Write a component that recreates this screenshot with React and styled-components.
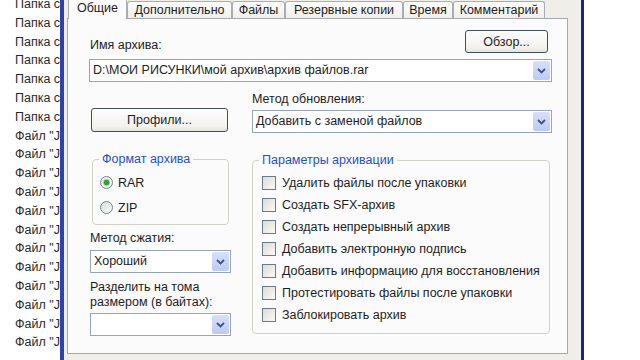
import React from 'react';
import styled, { createGlobalStyle } from 'styled-components';

const GlobalStyle = createGlobalStyle`
  html, body {
    margin: 0;
    padding: 0;
    background: #fff;
  }
  body {
    font-family: "Liberation Sans", Arial, sans-serif;
    font-size: 12.5px;
    color: #1d1d1d;
  }
`;

const tabs = [
  { label: 'Общие', width: 59, active: true },
  { label: 'Дополнительно', width: 105 },
  { label: 'Файлы', width: 53 },
  { label: 'Резервные копии', width: 118 },
  { label: 'Время', width: 50 },
  { label: 'Комментарий', width: 92 },
];

const options = [
  'Удалить файлы после упаковки',
  'Создать SFX-архив',
  'Создать непрерывный архив',
  'Добавить электронную подпись',
  'Добавить информацию для восстановления',
  'Протестировать файлы после упаковки',
  'Заблокировать архив',
];

// list behind the dialog, only its left edge is visible
const files = [...Array(7).fill('Папка с'), ...Array(12).fill('Файл "J')];

function Chevron() {
  return (
    <svg width="9" height="6" viewBox="0 0 9 6">
      <polyline points="1,1 4.5,4.5 8,1" fill="none" stroke="#3f5286" strokeWidth="1.8" />
    </svg>
  );
}

function Combo({ value }) {
  return (
    <ComboBox>
      <ComboText>{value}</ComboText>
      <DropButton>
        <Chevron />
      </DropButton>
    </ComboBox>
  );
}

function App() {
  return (
    <>
      <GlobalStyle />
      <Screen>
        <FileList>
          {files.map((f, i) => (
            <FileItem key={i}>{f}</FileItem>
          ))}
        </FileList>
        <Dialog>
          <TabStrip>
            {tabs.map((t) => (
              <Tab key={t.label} $width={t.width} $active={t.active}>
                {t.label}
              </Tab>
            ))}
          </TabStrip>
          <Panel>
            <TopRow>
              <Label>Имя архива:</Label>
              <Button $width={83} $right={4}>Обзор...</Button>
            </TopRow>
            <NameCombo>
              <Combo value="D:\МОИ РИСУНКИ\мой архив\архив файлов.rar" />
            </NameCombo>
            <Columns>
              <Column>
                <Button $width={137} $left={1} $top={16}>Профили...</Button>
                <Group $top={20} $left={2} $width={137}>
                  <Legend>Формат архива</Legend>
                  <GroupBody $pad="4px 0 4px 7px">
                    <RadioRow>
                      <Radio $checked />
                      RAR
                    </RadioRow>
                    <RadioRow>
                      <Radio />
                      ZIP
                    </RadioRow>
                  </GroupBody>
                </Group>
                <Label $top={6}>Метод сжатия:</Label>
                <Spaced $top={4}>
                  <Combo value="Хороший" />
                </Spaced>
                <Label $top={7}>
                  Разделить на тома
                  <br />
                  размером (в байтах):
                </Label>
                <Spaced $top={3}>
                  <Combo value="" />
                </Spaced>
              </Column>
              <Column>
                <Label>Метод обновления:</Label>
                <Spaced $top={3}>
                  <Combo value="Добавить с заменой файлов" />
                </Spaced>
                <Group $top={20} $width={298}>
                  <Legend>Параметры архивации</Legend>
                  <GroupBody $pad="5px 0 7px 9px">
                    {options.map((o) => (
                      <CheckRow key={o}>
                        <CheckBox />
                        {o}
                      </CheckRow>
                    ))}
                  </GroupBody>
                </Group>
              </Column>
            </Columns>
          </Panel>
        </Dialog>
      </Screen>
    </>
  );
}

const Screen = styled.div`
  display: flex;
  width: 640px;
  height: 360px;
  overflow: hidden;
  background: #fff;
`;

const FileList = styled.ul`
  flex: none;
  width: 60px;
  margin: -5px 0 0;
  padding: 0;
  list-style: none;
  overflow: hidden;
  white-space: nowrap;
`;

const FileItem = styled.li`
  height: 18.8px;
  line-height: 18.8px;
  padding-left: 15px;
  overflow: hidden;
  color: #2a2a2a;
`;

const Dialog = styled.div`
  flex: none;
  width: 514px;
  height: 360px;
  padding-left: 3px;
  border-left: 4px solid #2d44a6;
  border-right: 3px solid #1c2484;
  background: #efeee8;
  display: flex;
  flex-direction: column;
`;

const TabStrip = styled.div`
  display: flex;
  align-items: flex-end;
  height: 18px;
  margin-left: 1px;
`;

const Tab = styled.div`
  position: relative;
  box-sizing: border-box;
  width: ${(p) => p.$width}px;
  height: ${(p) => (p.$active ? 21 : 17)}px;
  margin-bottom: ${(p) => (p.$active ? -1 : 0)}px;
  padding-bottom: ${(p) => (p.$active ? 2 : 0)}px;
  z-index: ${(p) => (p.$active ? 1 : 0)};
  display: flex;
  align-items: center;
  justify-content: center;
  border: 1px solid #a7adb3;
  border-bottom: none;
  border-radius: 3px 3px 0 0;
  background: ${(p) => (p.$active ? '#fcfbfb' : 'linear-gradient(#fefefe, #f0efea)')};
  white-space: nowrap;
`;

const Panel = styled.div`
  box-sizing: border-box;
  width: 501px;
  height: 336px;
  padding: 11px 15px 0 22px;
  border: 1px solid #a3a9ae;
  background: #fcfbfb;
`;

const TopRow = styled.div`
  display: flex;
  justify-content: space-between;
  align-items: flex-end;
`;

const Label = styled.div`
  line-height: 15px;
  margin-top: ${(p) => p.$top || 0}px;
`;

const Button = styled.div`
  box-sizing: border-box;
  width: ${(p) => p.$width}px;
  height: ${(p) => (p.$top ? 24 : 23)}px;
  margin: ${(p) => p.$top || 0}px ${(p) => p.$right || 0}px 0 ${(p) => p.$left || 0}px;
  display: flex;
  align-items: center;
  justify-content: center;
  border: 1px solid #3e4f60;
  border-radius: 3px;
  background: linear-gradient(#fefefe, #f2f1ec 80%, #e3e2dc);
`;

const NameCombo = styled.div`
  margin: 6px 0 0 -1px;
`;

const Spaced = styled.div`
  margin-top: ${(p) => p.$top}px;
`;

const ComboBox = styled.div`
  box-sizing: border-box;
  height: 23px;
  display: flex;
  align-items: stretch;
  border: 1px solid #95a6ba;
  background: #fff;
`;

const ComboText = styled.div`
  flex: 1;
  padding-left: 3px;
  line-height: 21px;
  white-space: nowrap;
  overflow: hidden;
`;

const DropButton = styled.div`
  flex: none;
  width: 17px;
  margin: 1px;
  display: flex;
  align-items: center;
  justify-content: center;
  border-radius: 2px;
  background: linear-gradient(#d6e0fb, #bccbf2);
`;

const Columns = styled.div`
  display: grid;
  grid-template-columns: 141px 300px;
  column-gap: 21px;
  margin-top: 10px;
`;

const Column = styled.div`
  display: flex;
  flex-direction: column;
  align-items: stretch;
`;

const Group = styled.fieldset`
  box-sizing: border-box;
  width: ${(p) => p.$width}px;
  margin: ${(p) => p.$top}px 0 0 ${(p) => p.$left || 0}px;
  padding: 0;
  border: 1px solid #d3d2c6;
  border-radius: 4px;
`;

const Legend = styled.legend`
  margin-left: 6px;
  padding: 0 3px;
  line-height: 14px;
  color: #1f4fd0;
`;

const GroupBody = styled.div`
  padding: ${(p) => p.$pad};
`;

const RadioRow = styled.div`
  height: 25px;
  display: flex;
  align-items: center;
  gap: 5px;
`;

const Radio = styled.span`
  box-sizing: border-box;
  width: 13px;
  height: 13px;
  border-radius: 50%;
  border: 1px solid #6c8596;
  background: ${(p) =>
    p.$checked
      ? 'radial-gradient(circle, #2fa23a 0 2.5px, #8fcf8f 3px, #f4f4ee 4px)'
      : 'linear-gradient(135deg, #dcdcd5, #fbfbf8)'};
`;

const CheckRow = styled.div`
  height: 22px;
  display: flex;
  align-items: center;
  gap: 6px;
  white-space: nowrap;
`;

const CheckBox = styled.span`
  flex: none;
  box-sizing: border-box;
  width: 14px;
  height: 14px;
  border: 1px solid #6a7a89;
  background: linear-gradient(135deg, #dddcd6, #f9f9f6);
`;

export default App;
